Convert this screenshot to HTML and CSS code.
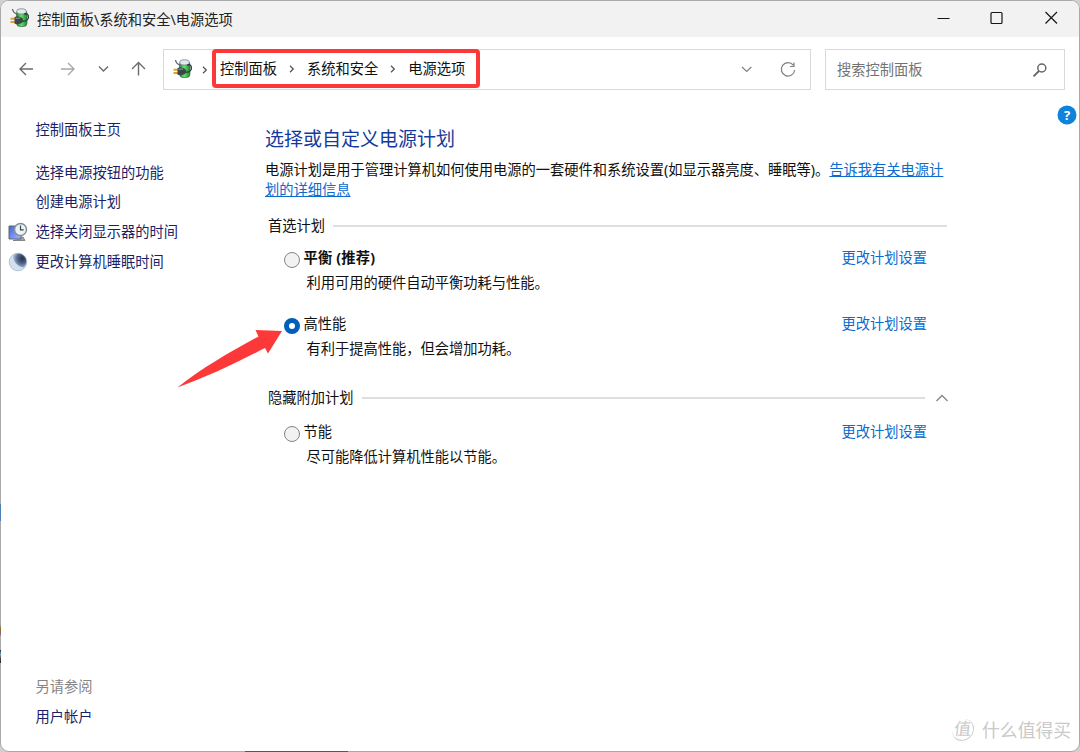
FILE: index.html
```html
<!DOCTYPE html>
<html lang="zh-CN">
<head>
<meta charset="utf-8">
<title>电源选项</title>
<link rel="stylesheet" href="styles.css">
</head>
<body>
<svg class="defs" width="0" height="0">
  <defs>
    <linearGradient id="battery" x1="0" x2="1" y1="0" y2="0"><stop offset="0" stop-color="#1c8f2c"/><stop offset=".45" stop-color="#63e070"/><stop offset="1" stop-color="#149028"/></linearGradient>
    <linearGradient id="screen" x1="0" x2="1" y1="0" y2="1"><stop offset="0" stop-color="#4164dc"/><stop offset="1" stop-color="#a5b9ff"/></linearGradient>
    <radialGradient id="moon" cx=".7" cy=".35" r=".7"><stop offset="0" stop-color="#26303f"/><stop offset=".55" stop-color="#546a92"/><stop offset="1" stop-color="#a9c4e2"/></radialGradient>
    <symbol id="power" viewBox="0 0 20 20">
      <rect x="6.500" y="2" width="10.500" height="16.500" rx="3.500" fill="url(#battery)" stroke="#41614a" stroke-width=".7"/>
      <ellipse cx="11.500" cy="3.400" rx="4.800" ry="2.600" fill="#e2e9ec" stroke="#76828a" stroke-width=".8"/>
      <path d="M2.500 1C3 4 4.500 5.500 7.500 6" fill="none" stroke="#5f6878" stroke-width="1.400"/>
      <path d="M12.500 13.300c4.500.2 6.700-2.800 5.800-5.500-.6-1.800-2.600-2.500-4.300-1.700" fill="none" stroke="#333c42" stroke-width="1.300"/>
      <path d="M.5 10.800h4.500M.5 14h4.500" stroke="#dba51c" stroke-width="1.900"/>
      <path d="M4.500 9l3-.8 4.500 1.600 1.500 2.500-1.500 2.700-4 1.300-3.500-.6z" fill="#3e4549"/>
      <path d="M5.500 10.300l4.500-.2" stroke="#90999c"/>
    </symbol>
  </defs>
</svg>
<div class="window">
  <header class="titlebar">
    <svg class="app-icon" viewBox="0 0 20 20"><use href="#power"/></svg>
    <span class="title">控制面板\系统和安全\电源选项</span>
    <svg class="controls" viewBox="0 0 130 36" fill="none" stroke="#151515" stroke-width="1.200">
      <path d="M6.500 17.500h12"/><rect x="60" y="11.500" width="11" height="11" rx="1"/><path d="M114.500 11l11.500 11.500M126 11L114.500 22.500"/>
    </svg>
  </header>
  <nav class="toolbar">
    <svg class="nav-icons" viewBox="0 0 148 40" fill="none" stroke="#6c6c6c" stroke-width="1.400">
      <path d="M32 20H19M25 14l-6 6 6 6"/>
      <path d="M60 20h13M67 14l6 6-6 6" stroke="#a8a8a8"/>
      <path d="M98 17.500l4.500 4.500L107 17.500"/>
      <path d="M137.500 26.500V14M131 20l6.500-6.500L144 20"/>
    </svg>
    <div class="address">
      <svg class="address-icon" viewBox="0 0 20 20"><use href="#power"/></svg>
      <svg class="sep first" viewBox="0 0 6 8"><path d="M1 .8L4.300 4 1 7.200"/></svg>
      <div class="crumbs">
        <span>控制面板</span>
        <svg class="sep" viewBox="0 0 6 8"><path d="M1 .8L4.300 4 1 7.200"/></svg>
        <span>系统和安全</span>
        <svg class="sep" viewBox="0 0 6 8"><path d="M1 .8L4.300 4 1 7.200"/></svg>
        <span>电源选项</span>
      </div>
      <svg class="address-tools" viewBox="0 0 70 40" fill="none" stroke="#818181" stroke-width="1.200">
        <path d="M2 17l4.700 4.500 4.700-4.500"/>
        <path d="M53.300 15.200a6.700 6.700 0 1 0 1.400 4.800M54 12.500v4h-4"/>
      </svg>
    </div>
    <div class="search">
      <span>搜索控制面板</span>
      <svg class="search-icon" viewBox="0 0 16 16" fill="none" stroke="#666" stroke-width="1.500"><circle cx="9.800" cy="6" r="4"/><path d="M7 9L1.500 14.300" stroke-width="1.800"/></svg>
    </div>
  </nav>
  <div class="body">
    <aside class="sidebar">
      <a class="home">控制面板主页</a>
      <a>选择电源按钮的功能</a>
      <a>创建电源计划</a>
      <a><svg class="task-icon" viewBox="0 0 20 20"><path d="M1 4h12v13H1z" fill="url(#screen)" stroke="#626773"/><path d="M5 18.500h12l-2-3.500h-2v2z" fill="#99a1b4" stroke="#777" stroke-width=".8"/><circle cx="12.500" cy="7.500" r="6" fill="#edf3f4" stroke="#888f94" stroke-width="1.500"/><path d="M12.500 3.500v4.300h3.200" fill="none" stroke="#35485a" stroke-width="1.200"/></svg>选择关闭显示器的时间</a>
      <a><svg class="task-icon" viewBox="0 0 20 20"><circle cx="10" cy="10" r="8.800" fill="#d3e1ee" stroke="#b5c5d3"/><path d="M5 3.500a8 8 0 1 1 10.500 12.200C9.500 14.500 5 10 5 3.500z" fill="url(#moon)"/></svg>更改计算机睡眠时间</a>
      <span class="see-also">另请参阅</span>
      <a>用户帐户</a>
    </aside>
    <main class="content">
      <h1>选择或自定义电源计划</h1>
      <p class="intro">电源计划是用于管理计算机如何使用电源的一套硬件和系统设置(如显示器亮度、睡眠等)。<a>告诉我有关电源计<br>划的详细信息</a></p>
      <section class="group">
        <h2>首选计划<i class="rule"></i></h2>
        <div class="plan">
          <div class="plan-head"><i class="radio"></i><b>平衡 (推荐)</b><a>更改计划设置</a></div>
          <p>利用可用的硬件自动平衡功耗与性能。</p>
        </div>
        <div class="plan">
          <div class="plan-head"><i class="radio checked"></i><span>高性能</span><a>更改计划设置</a></div>
          <p>有利于提高性能，但会增加功耗。</p>
        </div>
      </section>
      <section class="group extra">
        <h2>隐藏附加计划<i class="rule"></i><svg class="collapse" viewBox="0 0 14 8"><path d="M1.500 7L7 1.500 12.500 7" fill="none" stroke="#858585" stroke-width="1.300"/></svg></h2>
        <div class="plan">
          <div class="plan-head"><i class="radio"></i><span>节能</span><a>更改计划设置</a></div>
          <p>尽可能降低计算机性能以节能。</p>
        </div>
      </section>
    </main>
  </div>
  <svg class="help" viewBox="0 0 20 20"><circle cx="10" cy="10" r="9.500" fill="#0f83d9"/><text x="10" y="14.700" text-anchor="middle">?</text></svg>
  <svg class="arrow" viewBox="0 0 110 62"><path d="M.5 58.500C25 39 53 23 81.500 7.500L78.500 1 105 2 91 24.500 88 19C59 34 30 48 .5 58.500z"/></svg>
  <div class="watermark"><span class="badge">值</span><span>什么值得买</span></div>
</div>
<i class="peek blue"></i><i class="peek mixed"></i><i class="peek dark"></i><i class="peek bottom"></i>
</body>
</html>
```
FILE: styles.css
```css
* { box-sizing: border-box; }
body {
  margin: 0;
  width: 1080px;
  height: 752px;
  overflow: hidden;
  position: relative;
  background: #d0d0d0;
  color: #101010;
  font: 14.25px/20px "Noto Sans", "Noto Sans CJK SC", sans-serif;
}
h1, h2, p { margin: 0; font-weight: 400; }
svg { display: block; flex: none; }
a, span, b { white-space: nowrap; }
.defs { position: absolute; }
.window {
  position: relative;
  width: 1080px;
  height: 752px;
  border: 1px solid #a9a9a9;
  border-radius: 9px;
  background: #fff;
  overflow: hidden;
}
.titlebar { display: flex; align-items: center; height: 36px; padding: 0 18px 0 9px; background: #f2f2f2; }
.app-icon, .address-icon { width: 20px; height: 20px; }
.app-icon { margin-bottom: 2px; }
.title { margin-left: 7px; color: #222; line-height: 35px; }
.controls { width: 130px; height: 36px; margin-left: auto; }
.toolbar { display: flex; padding: 12px 14px 0 0; height: 58px; }
.nav-icons { width: 148px; height: 40px; margin-right: 14px; }
.address, .search { display: flex; align-items: center; height: 41px; border: 1px solid #d9d9d9; }
.address { width: 648px; padding-left: 9px; }
.address-icon { margin-bottom: 2px; }
.sep { width: 6px; height: 8px; fill: none; stroke: #555; stroke-width: 1.3; }
.sep.first { margin: 0 7px 0 9px; }
.crumbs {
  display: flex;
  align-items: center;
  gap: 12px;
  width: 268px;
  height: 39px;
  margin: 0 0 2px -3px;
  padding-left: 4px;
  border: 4px solid #fd3838;
  border-radius: 4px;
  line-height: 30px;
}
.address-tools { width: 70px; height: 40px; margin-left: auto; }
.search { width: 240px; margin-left: 14px; padding: 0 16px 0 11px; justify-content: space-between; color: #737373; }
.search-icon { width: 16px; height: 16px; }
.body { display: flex; height: 656px; }
.sidebar { display: flex; flex-direction: column; width: 264px; padding: 20.5px 0 0 7px; color: #1b1f68; }
.sidebar > * { display: flex; align-items: center; height: 29.6px; padding-left: 27.5px; }
.sidebar .home { margin-bottom: 13px; }
.task-icon { width: 20px; height: 20px; margin: 0 7.5px 0 -27.5px; }
.sidebar .see-also { margin-top: 396px; color: #858585; }
.content { width: 684px; padding-top: 30px; }
.content h1 { font-size: 19px; line-height: 28px; color: #133a9c; }
.intro { padding-top: 6.5px; }
.content a { color: #0a6cce; }
.intro a { text-decoration: underline; text-underline-offset: 1px; }
.group { padding: 15.5px 2px 0 3px; }
.group h2 { display: flex; align-items: center; height: 22px; font-size: 14.25px; }
.rule { flex: 1; height: 2px; margin-left: 8px; background: #dedede; }
.plan { height: 66.5px; padding: 10px 20px 0 16px; }
.plan-head { display: flex; align-items: center; height: 21px; }
.plan-head b { letter-spacing: .2px; }
.plan-head a { margin-left: auto; }
.radio { width: 16px; height: 16px; margin: 4px 3.5px 0 0; border: 1.3px solid #858585; border-radius: 50%; background: #f2f2f2; }
.radio.checked { border: 5px solid #005fb8; background: #fff; }
.plan p { padding: 4.5px 0 0 22.5px; line-height: 20px; }
.extra { padding-top: 17px; padding-right: 0; }
.extra .plan { padding-top: 12px; padding-right: 22px; }
.collapse { width: 14px; height: 8px; margin-left: 10px; }
.help { position: absolute; left: 1056px; top: 104px; width: 20px; height: 20px; }
.help text { fill: #fff; font: 700 13px "Open Sans", sans-serif; }
.arrow { position: absolute; left: 176px; top: 328px; width: 110px; height: 62px; overflow: visible; fill: #fd3838; }
.watermark { position: absolute; right: 8px; bottom: 9px; display: flex; align-items: center; gap: 8px; color: #c9c9c9; font-size: 17.8px; line-height: 24px; }
.badge { width: 22px; height: 22px; border-radius: 50%; border-right: 1px solid #ccc; border-bottom: 1px solid #ccc; font-size: 17px; line-height: 20px; text-align: center; transform: skewX(-6deg); }
.peek { position: absolute; left: 0; width: 1px; }
.blue { top: 504px; height: 17px; background: #4c80b4; }
.mixed { top: 624px; height: 14px; background: linear-gradient(#9ab, #9b6b25, #7a6678, #bbb); }
.dark { top: 650px; height: 13px; background: linear-gradient(#222, #79aac8, #444, #222); }
.bottom { left: 245px; top: 751px; width: 103px; height: 1px; background: #4054a0; }
```
